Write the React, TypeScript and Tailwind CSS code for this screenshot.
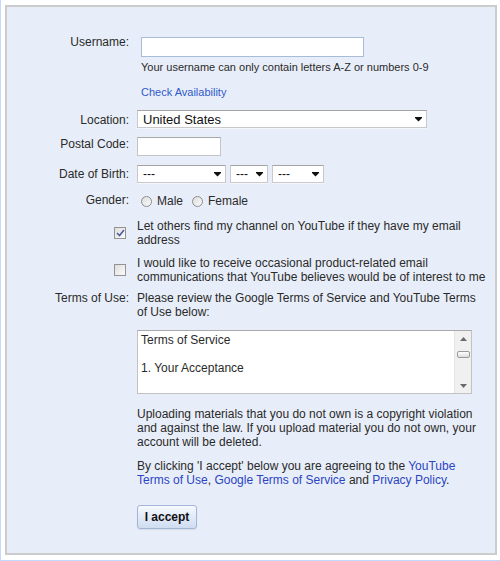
import React from 'react';

const font = { fontFamily: '"Liberation Sans", Arial, sans-serif' };

const Arrow = () => (
  <svg width="7" height="5" viewBox="0 0 7 5" className="shrink-0">
    <path d="M0 0h7v1L3.5 4.5 0 1z" fill="#111" />
  </svg>
);

const Select = ({ width, value, big }: { width: string; value: string; big?: boolean }) => (
  <div
    className={`${width} h-[18px] flex items-center justify-between pl-[5px] pr-[4px] bg-white border border-[#c9c9c9] border-t-[#a4a4a4] shadow-[0_1px_0_#f4f6fb] ${big ? 'text-[13px]' : 'text-[12px]'} text-[#111]`}
  >
    <span className="leading-none">{value}</span>
    <Arrow />
  </div>
);

const Radio = ({ label }: { label: string }) => (
  <label className="flex items-center gap-[5px]">
    <span className="w-[11px] h-[11px] rounded-full border border-[#8d8d8d] bg-gradient-to-br from-[#dcdcdc] to-[#fbfbfb]" />
    <span>{label}</span>
  </label>
);

const Checkbox = ({ checked }: { checked?: boolean }) => (
  <span className="w-[12px] h-[12px] mr-[3px] flex items-center justify-center border border-[#939393] bg-gradient-to-br from-[#dedede] to-[#fbfbfb]">
    {checked && (
      <svg width="9" height="8" viewBox="0 0 9 8">
        <path d="M1 4l2.5 2.5L8 1" stroke="#4b5c9c" strokeWidth="1.6" fill="none" />
      </svg>
    )}
  </span>
);

const Row = ({ label, className, labelClass, children }: {
  label?: React.ReactNode; className?: string; labelClass?: string; children: React.ReactNode;
}) => (
  <div className={`grid grid-cols-[122px_350px] gap-x-2 ${className ?? ''}`}>
    <div className={`flex justify-end ${labelClass ?? ''}`}>{label}</div>
    <div>{children}</div>
  </div>
);

export default function App() {
  return (
    <div style={font} className="w-[500px] h-[561px] bg-white border-l border-b border-[#c3d9ff] pl-[4px] pt-[5px] pb-[5px] text-[12px] leading-[14px] text-[#2a2a2a]">
      <div className="w-[492px] h-[550px] border-2 border-[#cccccc] bg-[#e8eef9] pt-[28px]">
        {/* Username */}
        <Row label="Username:">
          <div className="ml-1 mt-[2px] w-[223px] h-5 bg-white border border-[#a8bcd8]" />
          <p className="ml-1 mt-[3px] text-[11px]">Your username can only contain letters A-Z or numbers 0-9</p>
          <p className="ml-1 mt-[11px] text-[11px] text-[#2f5bc9]">Check Availability</p>
        </Row>

        <Row label="Location:" labelClass="pt-[3px]" className="mt-[11px]">
          <Select width="w-[290px]" value="United States" big />
        </Row>

        <Row label="Postal Code:" className="mt-[9px]">
          <div className="w-[84px] h-[19px] bg-white border border-[#c4c4c4] border-t-[#a9a9a9]" />
        </Row>

        <Row label="Date of Birth:" labelClass="pt-[2px]" className="mt-[9px]">
          <div className="flex gap-1">
            <Select width="w-[89px]" value="---" />
            <Select width="w-[38px]" value="---" />
            <Select width="w-[52px]" value="---" />
          </div>
        </Row>

        <Row label="Gender:" className="mt-[10px]">
          <div className="flex items-center gap-[9px] pl-[4px] pt-[1px]">
            <Radio label="Male" />
            <Radio label="Female" />
          </div>
        </Row>

        <Row label={<Checkbox checked />} labelClass="items-center" className="mt-[11px]">
          <p>Let others find my channel on YouTube if they have my email address</p>
        </Row>

        <Row label={<Checkbox />} labelClass="items-center" className="mt-[9px]">
          <p>I would like to receive occasional product-related email communications that YouTube believes would be of interest to me</p>
        </Row>

        <Row label="Terms of Use:" className="mt-[7px]">
          <p>Please review the Google Terms of Service and YouTube Terms of Use below:</p>

          <div className="mt-[11px] w-[335px] h-16 flex bg-white border border-[#c2c2c2] border-t-[#a9a9a9]">
            <div className="flex-1 pl-[3px] pt-[2px]">
              <p>Terms of Service</p>
              <p className="h-[14px]" />
              <p>1. Your Acceptance</p>
            </div>
            <div className="w-[17px] flex flex-col items-center bg-[#f0f0f0] border-l border-[#e6e6e6] pt-[6px] pb-[5px]">
              <svg width="7" height="4" viewBox="0 0 7 4"><path d="M3.5 0L7 4H0z" fill="#6a6a6a" /></svg>
              <div className="mt-[10px] w-[13px] h-[7px] rounded-[2px] border border-[#9a9a9a] bg-gradient-to-b from-white to-[#dcdcdc]" />
              <div className="flex-1" />
              <svg width="7" height="4" viewBox="0 0 7 4"><path d="M0 0h7L3.5 4z" fill="#6a6a6a" /></svg>
            </div>
          </div>

          <p className="mt-[13px]">
            Uploading materials that you do not own is a copyright violation and against the law. If you upload material you do not own, your account will be deleted.
          </p>

          <p className="mt-[10px]">
            By clicking 'I accept' below you are agreeing to the{' '}
            <a className="text-[#2b45c2]">YouTube Terms of Use</a>,{' '}
            <a className="text-[#2b45c2]">Google Terms of Service</a> and{' '}
            <a className="text-[#2b45c2]">Privacy Policy</a>.
          </p>

          <button className="mt-[18px] w-[60px] h-[24px] rounded-[3px] border border-[#a3b5d6] bg-gradient-to-b from-[#f6f9ff] to-[#cfdcf1] text-[12px] font-bold text-[#111] shadow-[0_1px_1px_rgba(0,0,0,0.08)]">
            I accept
          </button>
        </Row>
      </div>
    </div>
  );
}
